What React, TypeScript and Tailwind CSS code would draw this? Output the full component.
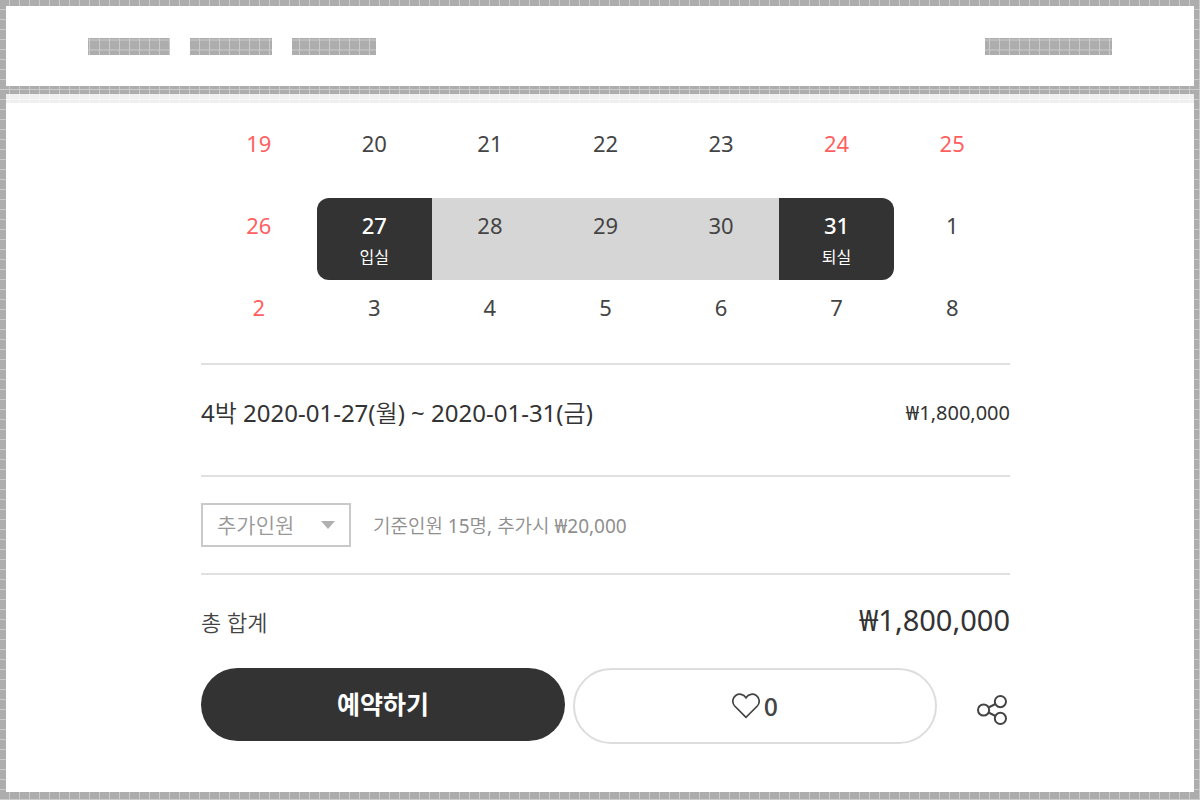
import clsx from "clsx";

type Day = {
  date: number;
  holiday?: boolean;
  stay?: "in" | "mid" | "out";
};

const weeks: Day[][] = [
  [
    { date: 19, holiday: true },
    { date: 20 },
    { date: 21 },
    { date: 22 },
    { date: 23 },
    { date: 24, holiday: true },
    { date: 25, holiday: true },
  ],
  [
    { date: 26, holiday: true },
    { date: 27, stay: "in" },
    { date: 28, stay: "mid" },
    { date: 29, stay: "mid" },
    { date: 30, stay: "mid" },
    { date: 31, stay: "out" },
    { date: 1 },
  ],
  [
    { date: 2, holiday: true },
    { date: 3 },
    { date: 4 },
    { date: 5 },
    { date: 6 },
    { date: 7 },
    { date: 8 },
  ],
];

// bg-fixed keeps the grid lines of every patch on the same 10px raster
const hatch =
  "bg-[#adadad] bg-fixed bg-size-[10px_10px] bg-[image:linear-gradient(to_right,transparent_9px,#cbcbcb_9px),linear-gradient(to_bottom,transparent_9px,#cbcbcb_9px)]";

const DayCell = ({ day }: { day: Day }) => {
  const picked = day.stay === "in" || day.stay === "out";

  return (
    <td
      className={clsx(
        "h-[82px] p-0 align-top",
        picked && "bg-[#333333]",
        day.stay === "in" && "rounded-l-xl",
        day.stay === "out" && "rounded-r-xl",
        day.stay === "mid" && "bg-[#d6d6d6]"
      )}
    >
      <button
        type="button"
        className={clsx(
          "flex w-full flex-col items-center pt-[11px] text-[22px] leading-8",
          picked && "font-medium text-white",
          !picked && (day.holiday ? "text-[#ff5f5f]" : "text-[#444444]")
        )}
      >
        {day.date}
        {picked && (
          <span className="text-base leading-8 font-normal">{day.stay === "in" ? "입실" : "퇴실"}</span>
        )}
      </button>
    </td>
  );
};

const HeartIcon = () => (
  <svg width="28" height="26" viewBox="0 0 28 26" fill="none" stroke="#444444" strokeWidth="1.7" aria-hidden="true">
    <path d="M14 24.3 2.7 13C-.1 9.8.2 5 3.7 2.5 6.8.4 11.5.7 14 4.8 16.5.7 21.2.4 24.3 2.5 27.8 5 28.1 9.8 25.3 13Z" />
  </svg>
);

const ShareIcon = () => (
  <svg width="30" height="30" viewBox="0 0 30 30" fill="none" stroke="#444444" strokeWidth="2" aria-hidden="true">
    <circle cx="6.6" cy="15" r="5.6" />
    <circle cx="23.4" cy="6.6" r="5.6" />
    <circle cx="23.4" cy="23.4" r="5.6" />
    <path d="m11.5 12.5 7-3.5M11.5 17.5l7 3.5" />
  </svg>
);

const Header = () => (
  <header className="flex h-20 items-center justify-between bg-white px-[82px]">
    <div className="flex gap-5">
      <div className={`h-[17px] w-[82px] ${hatch}`} />
      <div className={`h-[17px] w-[82px] ${hatch}`} />
      <div className={`h-[17px] w-[84px] ${hatch}`} />
    </div>
    <div className={`h-[17px] w-[127px] ${hatch}`} />
  </header>
);

export default function App() {
  return (
    <div
      className={`flex min-h-screen flex-col gap-2 px-1.5 pt-1.5 pb-2 font-['Noto_Sans','Noto_Sans_CJK_KR',sans-serif] text-[#333333] ${hatch}`}
    >
      <Header />

      <main className="flex-1 bg-white">
        <div className={hatch}>
          <div className="h-[9px] bg-white/80" />
        </div>

        <div className="pt-[13px] pr-[184px] pl-[195px]">
          <table className="mb-px w-full table-fixed border-separate border-spacing-0">
            <tbody>
              {weeks.map((week) => (
                <tr key={week[0].date}>
                  {week.map((day) => (
                    <DayCell key={day.date} day={day} />
                  ))}
                </tr>
              ))}
            </tbody>
          </table>

          <section className="flex h-28 justify-between border-t-2 border-[#e0e0e0] pt-8">
            <p className="text-2xl leading-8">
              4<span className="font-[350]">박</span> 2020-01-27(<span className="font-[350]">월</span>) ~ 2020-01-31(
              <span className="font-[350]">금</span>)
            </p>
            <p className="text-xl leading-8">₩1,800,000</p>
          </section>

          <section className="flex h-[98px] items-center gap-[22px] border-t-2 border-[#e0e0e0]">
            <div className="relative">
              <select
                aria-label="추가인원"
                className="h-11 w-[150px] appearance-none border-2 border-[#c9c9c9] bg-white pt-0.5 pl-3.5 text-[21px] font-[350] text-[#999999]"
              >
                <option>추가인원</option>
              </select>
              <svg
                className="pointer-events-none absolute top-[18px] right-4"
                width="14"
                height="8"
                viewBox="0 0 14 8"
                fill="#b0b0b0"
                aria-hidden="true"
              >
                <path d="M0 0h14L7 8z" />
              </svg>
            </div>
            <p className="pt-0.5 text-[19px] text-[#8f8f8f]">
              <span className="font-[350]">기준인원</span> 15<span className="font-[350]">명</span>,{" "}
              <span className="font-[350]">추가시</span> ₩20,000
            </p>
          </section>

          <section className="border-t-2 border-[#e0e0e0] pt-[27px]">
            <div className="flex h-[66px] items-start justify-between">
              <p className="text-[22px] leading-10 font-[350] text-[#444444]">총 합계</p>
              <p className="text-[29px] leading-9">₩1,800,000</p>
            </div>

            <div className="grid grid-cols-[1fr_1fr_65px] items-start gap-2 pb-10">
              <button type="button" className="h-[73px] rounded-full bg-[#333333] text-[25px] font-bold text-white">
                예약하기
              </button>
              <button
                type="button"
                aria-label="0"
                className="flex h-[76px] items-center justify-center gap-1 rounded-full border-2 border-[#dddddd] font-['Noto_Sans_CJK_KR',sans-serif] text-[25px] font-medium text-[#444444]"
              >
                <HeartIcon />
                <span>0</span>
              </button>
              <button type="button" aria-label="공유" className="flex h-[84px] items-center justify-end pr-[3px]">
                <ShareIcon />
              </button>
            </div>
          </section>
        </div>
      </main>
    </div>
  );
}
